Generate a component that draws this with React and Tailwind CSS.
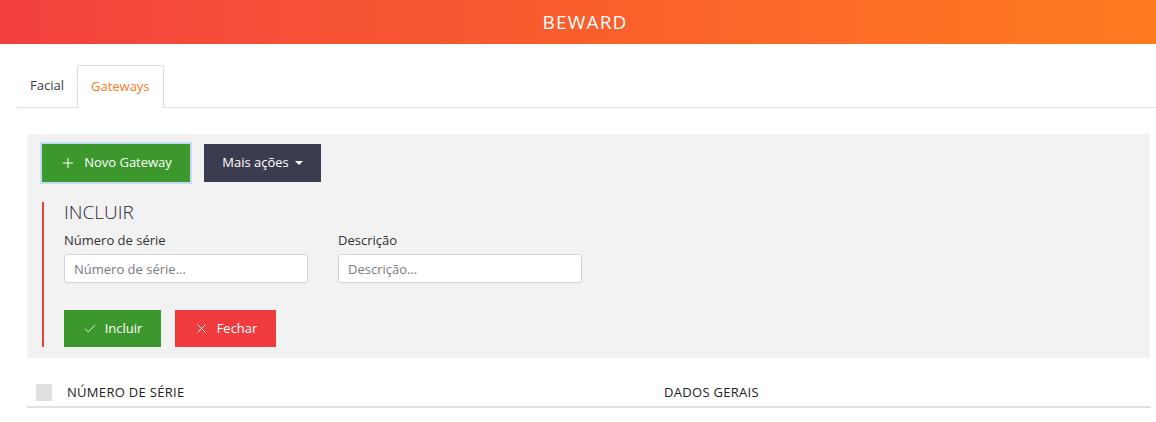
import React from "react";
import { Plus, Check, X } from "lucide-react";

const font = { fontFamily: '"Open Sans", "Noto Sans", sans-serif' };

function Field({ label, placeholder }) {
  return (
    <div className="flex flex-col w-[244px]">
      <label className="text-[13px] text-[#333] leading-[18px] mb-[5px]">{label}</label>
      <input
        placeholder={placeholder}
        className="h-[29px] px-[9px] text-[13px] bg-white border border-[#d2d2d8] rounded-[3px] placeholder:text-[#7a7a82] outline-none"
      />
    </div>
  );
}

export default function App() {
  return (
    <div className="w-[1156px] h-[422px] bg-white overflow-hidden" style={font}>
      {/* top bar */}
      <header className="h-[44px] flex items-center justify-center bg-gradient-to-r from-[#f2403f] via-[#f95e2c] to-[#ff7b1f]">
        <h1 className="text-white text-[19px] tracking-[1.2px] pl-[14px]">BEWARD</h1>
      </header>

      {/* tabs */}
      <ul className="flex ml-[17px] mt-[21px] border-b border-[#dcdde3]">
        <li className="h-[42px] px-[13px] flex items-center text-[13px] text-[#3a3a4a]">Facial</li>
        <li className="h-[43px] -mb-px px-[13px] flex items-center text-[13px] text-[#ff7a1f] bg-white border border-b-0 border-[#dcdde3] rounded-t-[3px]">
          Gateways
        </li>
      </ul>

      {/* gateway panel */}
      <section className="ml-[27px] mr-[6px] mt-[26px] bg-[#f2f2f2] pt-[10px] pb-[11px] pl-[15px]">
        <div className="flex gap-[14px]">
          <button className="w-[148px] h-[38px] flex items-center justify-center gap-[8px] bg-[#3c982d] text-white text-[13px] ring-2 ring-[#c3dcf3]">
            <Plus size={16} strokeWidth={1.5} />
            Novo Gateway
          </button>
          <button className="w-[117px] h-[38px] flex items-center justify-center gap-[6px] bg-[#3c3c50] text-white text-[13px]">
            Mais ações
            <span className="w-0 h-0 border-l-[4px] border-r-[4px] border-t-[4px] border-l-transparent border-r-transparent border-t-white" />
          </button>
        </div>

        <div className="mt-[20px] border-l-2 border-[#f2403f] pl-[20px]">
          <h2 className="text-[19px] font-light text-[#2a2a35] leading-[20px]">INCLUIR</h2>
          <div className="flex gap-[30px] mt-[9px]">
            <Field label="Número de série" placeholder="Número de série..." />
            <Field label="Descrição" placeholder="Descrição..." />
          </div>
          <div className="flex gap-[14px] mt-[27px]">
            <button className="w-[97px] h-[37px] flex items-center justify-center gap-[8px] bg-[#3c982d] text-white text-[13px]">
              <Check size={14} strokeWidth={1.5} />
              Incluir
            </button>
            <button className="w-[101px] h-[37px] flex items-center justify-center gap-[8px] bg-[#f03c3e] text-white text-[13px]">
              <X size={15} strokeWidth={1.5} />
              Fechar
            </button>
          </div>
        </div>
      </section>

      {/* table head */}
      <div className="ml-[27px] mr-[6px] mt-[21px] h-[29px] flex items-center border-b-2 border-[#dee2e6] pl-[9px]">
        <span className="w-[16px] h-[17px] bg-[#dfdfdf]" />
        <span className="ml-[15px] w-[597px] text-[13px] tracking-[0.3px] font-medium text-[#222]">NÚMERO DE SÉRIE</span>
        <span className="text-[13px] tracking-[0.3px] font-medium text-[#222]">DADOS GERAIS</span>
      </div>
    </div>
  );
}
